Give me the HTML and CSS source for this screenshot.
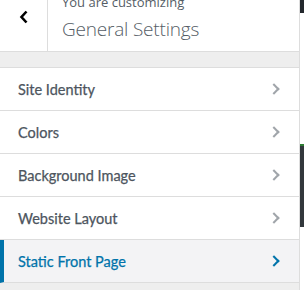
FILE: index.html
```html
<!DOCTYPE html>
<html lang="en">
<head>
    <meta charset="UTF-8">
    <title>Customize: General Settings</title>
    <link rel="stylesheet" href="styles.css">
</head>
<body>
    <div class="screen">
        <div class="panel">
            <div class="panel-header">
                <button class="back-btn" aria-label="Back">
                    <svg width="10" height="14" viewBox="0 0 10 14">
                        <path d="M7.5 1.5 L2.5 7 L7.5 12.5" fill="none" stroke="#000" stroke-width="2.6"/>
                    </svg>
                </button>
                <div class="panel-title">
                    <span class="action">You are customizing</span>
                    <h2>General Settings</h2>
                </div>
            </div>

            <ul class="sections">
                <li class="section">Site Identity<span class="chev"></span></li>
                <li class="section">Colors<span class="chev"></span></li>
                <li class="section">Background Image<span class="chev"></span></li>
                <li class="section">Website Layout<span class="chev"></span></li>
                <li class="section active">Static Front Page<span class="chev"></span></li>
            </ul>
        </div>

        <div class="preview">
            <div class="admin-bar"></div>
            <div class="gap-top"></div>
            <div class="dark-block"></div>
        </div>
    </div>
</body>
</html>
```

FILE: styles.css
```css
* {
    margin: 0;
    padding: 0;
    box-sizing: border-box;
}

body {
    font-family: 'Lato', 'Open Sans', sans-serif;
    background: #fff;
    color: #555d66;
    overflow: hidden;
}

.screen {
    display: flex;
    width: 304px;
    height: 290px;
}

.panel {
    width: 300px;
    flex-shrink: 0;
    background: #eee;
    border-right: 1px solid #ddd;
}

.panel-header {
    display: flex;
    height: 52px;
    background: #fff;
    border-bottom: 1px solid #ddd;
    margin-bottom: 15px;
    overflow: hidden;
}

.back-btn {
    width: 48px;
    flex-shrink: 0;
    background: #fff;
    border: none;
    border-right: 1px solid #ddd;
    display: flex;
    justify-content: center;
    align-items: flex-start;
    padding-top: 10px;
}

.panel-title {
    padding-left: 14px;
    margin-top: -6px;
}

.action {
    display: block;
    font-family: 'Open Sans', sans-serif;
    font-size: 13px;
    line-height: 16px;
    color: #555d66;
}

.panel-title h2 {
    font-family: 'Open Sans', sans-serif;
    font-size: 19px;
    font-weight: 300;
    line-height: 26px;
    margin-top: 6px;
    letter-spacing: -0.2px;
    color: #555d66;
}

.sections {
    list-style: none;
    border-top: 1px solid #ddd;
}

.section {
    display: flex;
    align-items: center;
    justify-content: space-between;
    height: 43px;
    padding: 0 19px 0 18px;
    background: #fff;
    border-bottom: 1px solid #ddd;
    font-size: 14.5px;
    font-weight: 400;
    color: #4d555e;
    -webkit-text-stroke: 0.25px #4d555e;
}

.chev {
    width: 8px;
    height: 8px;
    border-top: 2px solid #a0a5aa;
    border-right: 2px solid #a0a5aa;
    transform: rotate(45deg);
    margin-right: 2px;
}

.section.active {
    background: #f3f3f5;
    color: #0073aa;
    -webkit-text-stroke-color: #0073aa;
    border-left: 4px solid #0073aa;
    padding-left: 14px;
}

.section.active .chev {
    border-color: #0073aa;
}

.preview {
    flex: 1;
    display: flex;
    flex-direction: column;
}

.admin-bar {
    height: 13px;
    background: #23282d;
}

.gap-top {
    height: 131px;
}

.dark-block {
    height: 83px;
    background: #32373c;
    border-top: 2px solid #2e7d32;
}
```
